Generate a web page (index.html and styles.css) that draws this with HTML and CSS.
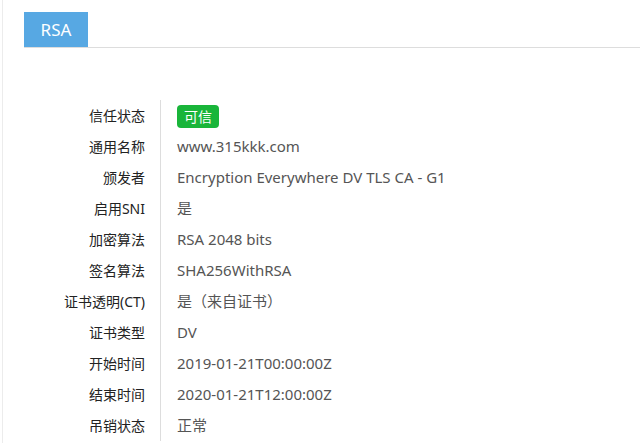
FILE: index.html
```html
<!DOCTYPE html>
<html lang="zh-CN">

<head>
    <meta charset="UTF-8">
    <title>证书信息</title>
    <link rel="stylesheet" href="styles.css">
</head>

<body>
    <div class="page">
        <div class="tabs">
            <div class="tab active">RSA</div>
        </div>

        <div class="cert-table">
            <div class="label">信任状态</div>
            <div class="value"><span class="badge">可信</span></div>

            <div class="label">通用名称</div>
            <div class="value">www.315kkk.com</div>

            <div class="label">颁发者</div>
            <div class="value">Encryption Everywhere DV TLS CA - G1</div>

            <div class="label">启用SNI</div>
            <div class="value">是</div>

            <div class="label">加密算法</div>
            <div class="value">RSA 2048 bits</div>

            <div class="label">签名算法</div>
            <div class="value">SHA256WithRSA</div>

            <div class="label">证书透明(CT)</div>
            <div class="value">是（来自证书）</div>

            <div class="label">证书类型</div>
            <div class="value">DV</div>

            <div class="label">开始时间</div>
            <div class="value">2019-01-21T00:00:00Z</div>

            <div class="label">结束时间</div>
            <div class="value">2020-01-21T12:00:00Z</div>

            <div class="label">吊销状态</div>
            <div class="value">正常</div>
        </div>
    </div>
</body>

</html>
```

FILE: styles.css
```css
/* Reset */
* {
    margin: 0;
    padding: 0;
    box-sizing: border-box;
}

body {
    background: #ffffff;
    font-family: "Noto Sans", "Noto Sans CJK SC", sans-serif;
    font-size: 14px;
    color: #333333;
    overflow: hidden;
}

/* Page */
.page {
    margin-left: 2px;
    border-left: 1px solid #ececec;
    padding: 12px 0 0 21px;
    min-height: 443px;
}

/* Tabs */
.tabs {
    display: flex;
    border-bottom: 1px solid #dddddd;
}

.tab {
    width: 64px;
    height: 35px;
    line-height: 35px;
    text-align: center;
    font-size: 17px;
    color: #ffffff;
}

.tab.active {
    background: #57a8e3;
}

/* Certificate table */
.cert-table {
    display: grid;
    grid-template-columns: 137px 1fr;
    margin-top: 52px;
}

.label,
.value {
    height: 31px;
    line-height: 31px;
    white-space: nowrap;
}

.label {
    text-align: right;
    padding-right: 15px;
    border-right: 1px solid #dddddd;
    color: #222222;
}

.value {
    padding-left: 16px;
    font-size: 15px;
    color: #555555;
}

.badge {
    display: inline-block;
    background: #19b53a;
    color: #ffffff;
    font-size: 14px;
    border-radius: 4px;
    padding: 0 7px;
    line-height: 23px;
    vertical-align: middle;
}
```
